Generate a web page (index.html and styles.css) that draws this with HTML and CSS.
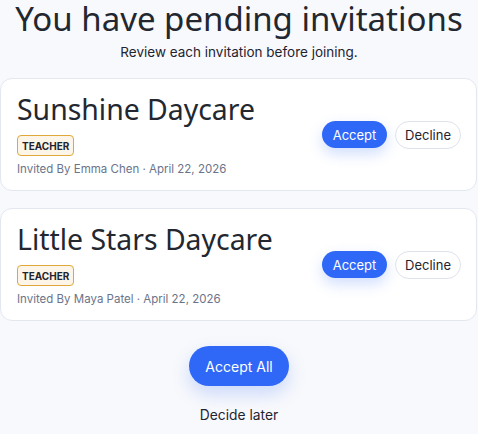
FILE: index.html
```html
<!DOCTYPE html>
<html lang="en">
<head>
<meta charset="utf-8">
<title>Pending invitations</title>
<link rel="stylesheet" href="styles.css">
</head>
<body>
<main class="page">
  <header class="header">
    <h1 class="title">You have pending invitations</h1>
    <p class="subtitle">Review each invitation before joining.</p>
  </header>
  <section class="list">
    <article class="card">
      <div class="info">
        <h2 class="name">Sunshine Daycare</h2>
        <span class="badge">TEACHER</span>
        <p class="meta">Invited By Emma Chen · April 22, 2026</p>
      </div>
      <div class="actions">
        <button class="btn btn-accept">Accept</button>
        <button class="btn btn-decline">Decline</button>
      </div>
    </article>
    <article class="card">
      <div class="info">
        <h2 class="name">Little Stars Daycare</h2>
        <span class="badge">TEACHER</span>
        <p class="meta">Invited By Maya Patel · April 22, 2026</p>
      </div>
      <div class="actions">
        <button class="btn btn-accept">Accept</button>
        <button class="btn btn-decline">Decline</button>
      </div>
    </article>
  </section>
  <footer class="footer">
    <button class="btn-all">Accept All</button>
    <button class="later">Decide later</button>
  </footer>
</main>
</body>
</html>
```

FILE: styles.css
```css
* { box-sizing: border-box; }
html, body {
  margin: 0;
  padding: 0;
  background: #f8f9fc;
}
body {
  font-family: Inter, "Liberation Sans", sans-serif;
  color: #1f2430;
}
.page {
  width: 478px;
  display: flex;
  flex-direction: column;
}
.header {
  display: flex;
  flex-direction: column;
  align-items: center;
}
.title {
  margin: 0;
  font-family: "Noto Sans", "Open Sans", sans-serif;
  font-weight: 400;
  font-size: 33px;
  line-height: 38px;
  color: #23272f;
}
.subtitle {
  margin: 5px 0 0;
  font-size: 13.5px;
  line-height: 18px;
  color: #1f2430;
}
.list {
  margin-top: 17px;
  display: flex;
  flex-direction: column;
  gap: 17px;
  padding-right: 1px;
}
.card {
  display: flex;
  align-items: center;
  justify-content: space-between;
  background: #ffffff;
  border: 1px solid #e3e7ef;
  border-radius: 12px;
  padding: 13px 15px 13px 16px;
}
.info {
  display: flex;
  flex-direction: column;
  align-items: flex-start;
}
.name {
  margin: 0;
  font-family: "Noto Sans", "Open Sans", sans-serif;
  font-weight: 400;
  font-size: 28.4px;
  line-height: 34px;
  color: #23272f;
}
.badge {
  margin-top: 9px;
  height: 21px;
  padding: 0 4px;
  display: inline-flex;
  align-items: center;
  border: 1px solid #e0a83a;
  background: #fdf6e8;
  border-radius: 4px;
  font-size: 10px;
  font-weight: 700;
  color: #1f2430;
}
.meta {
  margin: 5px 0 0;
  font-size: 11.5px;
  line-height: 16px;
  color: #6b7489;
}
.actions {
  display: flex;
  gap: 8px;
  align-items: center;
}
.btn {
  font-family: inherit;
  font-size: 13px;
  height: 28px;
  border-radius: 14px;
  padding: 0;
  cursor: pointer;
}
.btn-accept {
  border: none;
  background: #2f68f7;
  color: #ffffff;
  height: 27px;
  width: 65px;
  box-shadow: 0 6px 14px rgba(47, 104, 247, 0.22);
}
.btn-decline {
  background: #ffffff;
  border: 1.5px solid #dde2ec;
  color: #1f2430;
  width: 66px;
}
.footer {
  margin-top: 25px;
  display: flex;
  flex-direction: column;
  align-items: center;
}
.btn-all {
  width: 100px;
  height: 40px;
  border: none;
  border-radius: 20px;
  background: #2f68f7;
  color: #ffffff;
  font-family: inherit;
  font-size: 14px;
  box-shadow: 0 8px 18px rgba(47, 104, 247, 0.22);
  cursor: pointer;
}
.later {
  margin-top: 20px;
  background: none;
  border: none;
  padding: 0;
  font-family: inherit;
  font-size: 13.8px;
  line-height: 18px;
  color: #1f2430;
  cursor: pointer;
}
```
